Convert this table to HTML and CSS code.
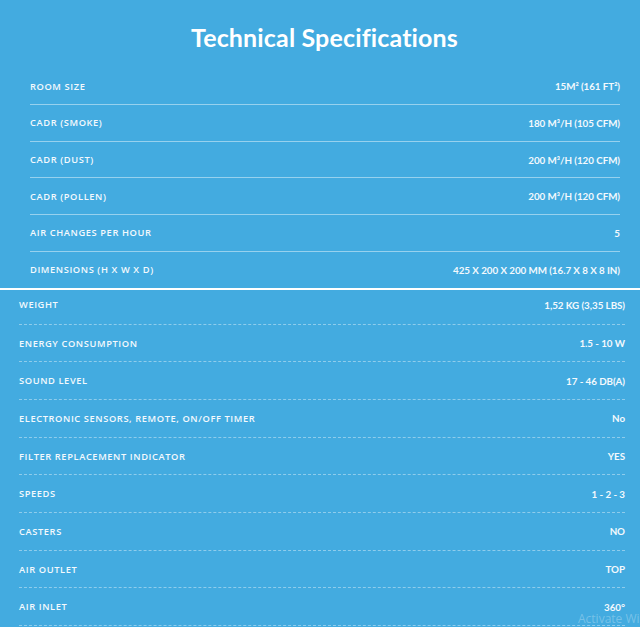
FILE: index.html
```html
<!DOCTYPE html>
<html lang="en">
<head>
<meta charset="utf-8">
<title>Technical Specifications</title>
<link rel="stylesheet" href="styles.css">
</head>
<body>
<main class="specs">
  <header class="specs-head">
    <h1 class="specs-title">Technical Specifications</h1>
  </header>
  <section class="group group-top">
    <div class="row"><span class="label">Room size</span><span class="value">15M² (161 FT²)</span></div>
    <div class="row"><span class="label">CADR (Smoke)</span><span class="value">180 M³/H (105 CFM)</span></div>
    <div class="row"><span class="label">CADR (Dust)</span><span class="value">200 M³/H (120 CFM)</span></div>
    <div class="row"><span class="label">CADR (Pollen)</span><span class="value">200 M³/H (120 CFM)</span></div>
    <div class="row"><span class="label">Air changes per hour</span><span class="value">5</span></div>
    <div class="row"><span class="label">Dimensions (H x W x D)</span><span class="value">425 X 200 X 200 MM (16.7 X 8 X 8 IN)</span></div>
  </section>
  <section class="group group-bottom">
    <div class="row"><span class="label">Weight</span><span class="value">1,52 KG (3,35 LBS)</span></div>
    <div class="row"><span class="label">Energy consumption</span><span class="value">1.5 - 10 W</span></div>
    <div class="row"><span class="label">Sound level</span><span class="value">17 - 46 DB(A)</span></div>
    <div class="row"><span class="label">Electronic sensors, remote, on/off timer</span><span class="value">No</span></div>
    <div class="row"><span class="label">Filter replacement indicator</span><span class="value">YES</span></div>
    <div class="row"><span class="label">Speeds</span><span class="value">1 - 2 - 3</span></div>
    <div class="row"><span class="label">Casters</span><span class="value">NO</span></div>
    <div class="row"><span class="label">Air outlet</span><span class="value">TOP</span></div>
    <div class="row"><span class="label">Air inlet</span><span class="value">360°</span></div>
  </section>
  <div class="watermark">Activate Windows</div>
</main>
</body>
</html>
```
FILE: styles.css
```css
html, body {
  margin: 0;
  padding: 0;
  background: #43abe0;
  height: 100%;
  overflow: hidden;
}
.specs {
  position: relative;
  color: #f4f9fd;
  font-family: "Lato", "Open Sans", sans-serif;
  height: 627px;
  overflow: hidden;
}
.specs-head {
  height: 68.6px;
  display: flex;
  align-items: center;
  justify-content: center;
  padding-left: 9px;
  box-sizing: border-box;
}
.specs-title {
  margin: 0;
  margin-top: 6px;
  font-size: 25px;
  font-weight: 700;
  color: #ffffff;
  letter-spacing: 0.15px;
}
.group {
  display: flex;
  flex-direction: column;
}
.group-top {
  padding: 0 20px 0 30px;
}
.group-bottom {
  border-top: 2px solid #ffffff;
  padding: 0 15px 0 19px;
}
.row {
  display: flex;
  align-items: center;
  justify-content: space-between;
  box-sizing: border-box;
}
.group-top .row {
  height: 36.6px;
  border-bottom: 1px solid rgba(255, 255, 255, 0.45);
}
.group-top .row:last-child {
  border-bottom: none;
}
.group-bottom .row {
  height: 37.7px;
  border-bottom: 1px dashed rgba(255, 255, 255, 0.4);
}
.group-bottom .row:first-child {
  height: 34.5px;
  padding-bottom: 4px;
}
.label {
  font-family: "Open Sans", sans-serif;
  font-size: 9.3px;
  font-weight: 600;
  letter-spacing: 0.6px;
  text-transform: uppercase;
}
.value {
  font-family: "Lato", sans-serif;
  font-size: 9.8px;
  font-weight: 700;
  letter-spacing: -0.05px;
}
.watermark {
  position: absolute;
  left: 578px;
  top: 610px;
  font-family: "Open Sans", sans-serif;
  font-size: 12px;
  color: rgba(255, 255, 255, 0.28);
  white-space: nowrap;
}
```
